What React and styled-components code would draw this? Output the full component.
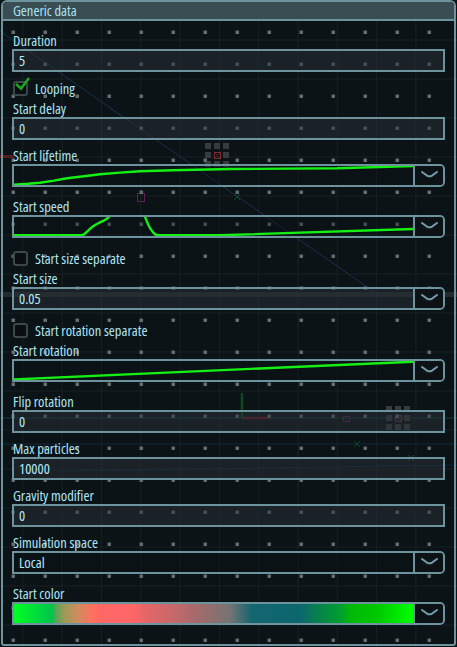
import React from 'react';
import styled, { createGlobalStyle, css } from 'styled-components';

const Global = createGlobalStyle`
  html, body { margin: 0; padding: 0; background: #0c1316; }
  body {
    width: 457px; height: 647px; overflow: hidden;
    font-family: "Open Sans", "DejaVu Sans Condensed", sans-serif;
    font-stretch: condensed;
  }
  * { box-sizing: border-box; }
`;

const Viewport = styled.div`
  position: relative;
  width: 457px;
  height: 647px;
  overflow: hidden;
`;

const Scene = styled.svg`
  position: absolute;
  left: 0;
  top: 0;
  width: 457px;
  height: 647px;
`;

const Panel = styled.section`
  position: relative;
  margin-left: 1px;
  width: 455px;
  height: 646px;
  border: 2px solid #6d939c;
  border-radius: 6px 6px 3px 3px;
  display: flex;
  flex-direction: column;
`;

const Header = styled.header`
  height: 19px;
  background: #3a4d53;
  border-bottom: 2px solid #6d939c;
  border-radius: 4px 4px 0 0;
  padding-left: 10px;
  font-size: 14.5px;
  line-height: 18px;
  color: #a9e3f3;
`;

const Body = styled.div`
  padding: 12px 9px 0 9px;
  display: flex;
  flex-direction: column;
`;

const Field = styled.div`
  display: flex;
  flex-direction: column;
  margin-bottom: ${(p) => (p.$wide ? 12 : 8)}px;
`;

const Label = styled.div`
  padding-left: 1px;
  font-size: 14.5px;
  line-height: 16px;
  height: 16px;
  color: #aee6f5;
  white-space: nowrap;
`;

const Box = styled.div`
  height: 23px;
  border: 2px solid #6d939c;
  display: flex;
  align-items: stretch;
  background: ${(p) => (p.$filled ? 'rgba(40, 48, 56, 0.5)' : 'rgba(12, 18, 22, 0.35)')};
  ${(p) =>
    p.$rounded &&
    css`
      border-radius: 0 5px 5px 0;
    `}
`;

const Content = styled.div`
  flex: 1;
  position: relative;
  overflow: hidden;
  display: flex;
  align-items: center;
`;

const Value = styled.span`
  padding-left: 5px;
  font-size: 14.5px;
  line-height: 16px;
  color: #b4ecfa;
`;

const CurveSvg = styled.svg`
  display: block;
  width: 100%;
  height: 100%;
`;

const GradientStrip = styled.div`
  width: 100%;
  height: 100%;
  background: linear-gradient(
    to right,
    #00ff22 0%,
    #00e03a 5%,
    #00c44c 9.7%,
    #4fa852 10.2%,
    #a59858 13%,
    #d08c5e 16%,
    #ff705e 19.8%,
    #ff6666 22%,
    #ff6666 29.8%,
    #e46668 33%,
    #c8686a 39.8%,
    #a86a6c 45%,
    #887070 51%,
    #767474 54.1%,
    #4a6e72 56.5%,
    #146670 59.6%,
    #0c666e 71.7%,
    #06804e 75.9%,
    #009e30 81.7%,
    #00b808 84.2%,
    #00c800 91%,
    #00ff00 100%
  );
`;

const DropButton = styled.div`
  width: 30px;
  flex: none;
  border-left: 2px solid #6d939c;
  background: #0c1216;
  border-radius: 0 3px 3px 0;
  display: flex;
  align-items: center;
  justify-content: center;
  padding-bottom: 2px;
`;

const CheckRow = styled.div`
  height: 21px;
  display: flex;
  align-items: flex-start;
  gap: 7px;
  padding-left: 1px;
`;

const CheckBox = styled.div`
  position: relative;
  margin-top: 1px;
  width: 15px;
  height: 15px;
  flex: none;
  border: 2px solid #3c474c;
  border-radius: 3px;
  background: #0a0e10;
`;

const CheckMark = styled.svg`
  position: absolute;
  left: -2px;
  top: -7px;
  width: 20px;
  height: 16px;
  overflow: visible;
`;

const CheckText = styled.span`
  font-size: 14.5px;
  line-height: 16px;
  margin-top: 1px;
  color: #aee6f5;
  white-space: nowrap;
`;

const Chevron = () => (
  <svg width="17" height="7" viewBox="0 0 17 7">
    <path d="M1 1 L6 4.6 Q8.5 6 11 4.6 L16 1" fill="none" stroke="#6f9ca8" strokeWidth="2" strokeLinecap="round" />
  </svg>
);

const CURVES = {
  lifetime: 'M0 18.6 L14 17.8 L26 16.7 L40 14.6 L53 12.3 L70 10.2 L86 8.3 L106 6.6 L126 5.3 L159 4.3 L216 3 L323 2.3 L399 0',
  speed:
    'M0 18.3 L67 18.3 C71 18.3 73 14 77 11 C81 7.5 85 6 90 3.5 C94 1.5 97 -2 99 -5 L129 -5 C131 -1 133 6 136 11 C139 16 141 18.3 145 18.3 L205 18.3 L399 12',
  rotation: 'M0 18.4 L399 0.7',
};

const Curve = ({ name }) => (
  <CurveSvg viewBox="0 0 399 19" preserveAspectRatio="none">
    <path d={CURVES[name]} fill="none" stroke="#14f014" strokeWidth="2.4" strokeLinejoin="round" />
  </CurveSvg>
);

const rows = [
  { type: 'field', label: 'Duration', kind: 'text', value: '5' },
  { type: 'check', label: 'Looping', checked: true },
  { type: 'field', label: 'Start delay', kind: 'text', value: '0' },
  { type: 'field', label: 'Start lifetime', kind: 'curve', curve: 'lifetime' },
  { type: 'field', label: 'Start speed', kind: 'curve', curve: 'speed' },
  { type: 'check', label: 'Start size separate' },
  { type: 'field', label: 'Start size', kind: 'select', value: '0.05', filled: true },
  { type: 'check', label: 'Start rotation separate' },
  { type: 'field', label: 'Start rotation', kind: 'curve', curve: 'rotation' },
  { type: 'field', label: 'Flip rotation', kind: 'text', value: '0' },
  { type: 'field', label: 'Max particles', kind: 'text', value: '10000' },
  { type: 'field', label: 'Gravity modifier', kind: 'text', value: '0' },
  { type: 'field', label: 'Simulation space', kind: 'select', value: 'Local' },
  { type: 'field', label: 'Start color', kind: 'gradient' },
];

const renderControl = (r) => {
  if (r.kind === 'text') {
    return (
      <Box $filled>
        <Content>
          <Value>{r.value}</Value>
        </Content>
      </Box>
    );
  }
  let inner;
  if (r.kind === 'select') inner = <Value>{r.value}</Value>;
  else if (r.kind === 'curve') inner = <Curve name={r.curve} />;
  else inner = <GradientStrip />;
  return (
    <Box $rounded $filled={r.filled}>
      <Content>{inner}</Content>
      <DropButton>
        <Chevron />
      </DropButton>
    </Box>
  );
};

const Gizmo = ({ x, y }) => {
  const cells = [];
  for (let i = 0; i < 3; i++)
    for (let j = 0; j < 3; j++)
      if (!(i === 1 && j === 1))
        cells.push(<rect key={`${i}-${j}`} x={x + i * 9} y={y + j * 9} width="6" height="6" fill="#353b3e" />);
  return (
    <g>
      {cells}
      <rect x={x + 9.5} y={y + 9.5} width="6" height="6" fill="none" stroke="#7a2a30" strokeWidth="1" />
      <path d={`M${x + 10} ${y + 10} l5 5 M${x + 15} ${y + 10} l-5 5`} stroke="#4a2226" strokeWidth="1" />
    </g>
  );
};

const SceneLayer = () => {
  const vlines = [];
  for (let k = 0; k < 12; k++) {
    const x = 22.9 + 39.3 * k;
    vlines.push(<line key={`v${k}`} x1={x} y1="0" x2={x} y2="647" stroke="#162024" strokeWidth="1" />);
  }
  const hlines = [];
  for (let k = 0; k < 17; k++) {
    const y = 40 + 39 * k;
    hlines.push(<line key={`h${k}`} x1="0" y1={y} x2="457" y2={y} stroke="#162024" strokeWidth="1" />);
  }
  const marks = [];
  for (let i = 0; i < 14; i++)
    for (let j = 0; j < 21; j++)
      marks.push(
        <rect key={`m${i}-${j}`} x={13 + 32 * i - 1.5} y={32 * j - 1.5} width="3.5" height="3.5" fill="#636c70" />
      );
  return (
    <Scene viewBox="0 0 457 647">
      <rect width="457" height="647" fill="#0c1316" />
      {vlines}
      {hlines}
      <line x1="0" y1="31" x2="380" y2="296" stroke="#163150" strokeWidth="1" />
      <rect x="0" y="292" width="457" height="5" fill="#2c363a" opacity="0.7" />
      <line x1="0" y1="418" x2="457" y2="418" stroke="#113c3c" strokeWidth="1" />
      <line x1="0" y1="444" x2="457" y2="444" stroke="#0e2a3c" strokeWidth="1" />
      <line x1="60" y1="471" x2="457" y2="465" stroke="#0e2a3c" strokeWidth="1" />
      <rect x="0" y="155" width="14" height="3" fill="#5a1a1e" />
      <line x1="242" y1="418" x2="269" y2="418" stroke="#5e1c1e" strokeWidth="2.5" />
      <line x1="242" y1="393" x2="242" y2="418" stroke="#0b4a1e" strokeWidth="2.5" />
      <Gizmo x={205} y={143} />
      <Gizmo x={386} y={406} />
      <rect x="137.5" y="193.5" width="7" height="8" fill="none" stroke="#5c1f58" strokeWidth="1" />
      <rect x="343.5" y="416.5" width="6" height="5" fill="none" stroke="#5c1f58" strokeWidth="1" />
      <path d="M234 194 l6 6 M240 194 l-6 6" stroke="#0d4a22" strokeWidth="1" />
      <path d="M354 441 l6 6 M360 441 l-6 6" stroke="#0d4a22" strokeWidth="1" />
      <path d="M408 455 l6 6 M414 455 l-6 6" stroke="#0d4a22" strokeWidth="1" />
      {marks}
    </Scene>
  );
};

export default function App() {
  return (
    <>
      <Global />
      <Viewport>
        <SceneLayer />
        <Panel>
          <Header>Generic data</Header>
          <Body>
            {rows.map((r) =>
              r.type === 'check' ? (
                <CheckRow key={r.label}>
                  <CheckBox>
                    {r.checked && (
                      <CheckMark viewBox="0 0 20 16">
                        <path d="M3 8 L8 12.5 L16 2" fill="none" stroke="#1fa51f" strokeWidth="2.6" />
                      </CheckMark>
                    )}
                  </CheckBox>
                  <CheckText>{r.label}</CheckText>
                </CheckRow>
              ) : (
                <Field key={r.label} $wide={r.kind !== 'text'}>
                  <Label>{r.label}</Label>
                  {renderControl(r)}
                </Field>
              )
            )}
          </Body>
        </Panel>
      </Viewport>
    </>
  );
}
